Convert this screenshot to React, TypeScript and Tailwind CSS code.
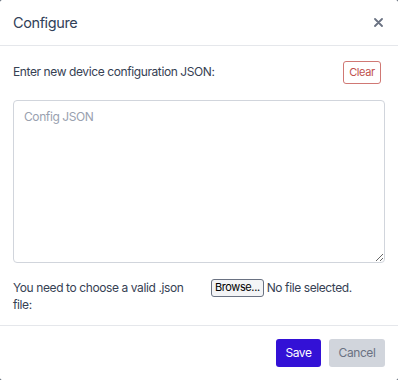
import React from 'react';

export default function App() {
    return (
        <div className="w-[398px] h-[380px] bg-gray-700 font-['Inter',sans-serif] tracking-tight">
            <div className="w-full h-full bg-white rounded-[2px] flex flex-col">
                {/* header */}
                <div className="h-[46px] flex items-center justify-between px-[13px] border-b border-gray-200">
                    <h2 className="text-[14.5px] text-slate-700">Configure</h2>
                    <button type="button" className="mr-[2px] text-gray-500" aria-label="Close">
                        <svg width="9" height="9" viewBox="0 0 9 9" stroke="currentColor" strokeWidth="1.8" strokeLinecap="round">
                            <path d="M1 1l7 7M8 1L1 8" />
                        </svg>
                    </button>
                </div>

                {/* body */}
                <div className="flex-1 px-[13px] pt-[15px] flex flex-col">
                    <div className="flex items-center justify-between">
                        <span className="text-[12px] text-gray-700 -mt-[2px]">Enter new device configuration JSON:</span>
                        <button type="button" className="h-[23px] w-[38px] mr-[4px] text-[11px] text-[#c0504d] border border-[#d07874] rounded-[3px]">Clear</button>
                    </div>
                    <textarea
                        placeholder="Config JSON"
                        className="mt-[16px] h-[163px] w-full resize-y rounded-[4px] border border-gray-300 px-[10px] py-[7px] text-[12px] text-gray-700 placeholder:text-gray-400 outline-none"
                    />
                    <div className="grid grid-cols-2 gap-x-6 mt-[16px] text-[12px] text-gray-700">
                        <span className="leading-[17px]">You need to choose a valid .json file:</span>
                        <div className="flex items-center gap-[3px] h-[17px]">
                            <span className="px-[3px] h-[18px] flex items-center border border-gray-500 rounded-[3px] bg-gray-100 text-[11px] text-black">Browse...</span>
                            <span className="text-gray-700">No file selected.</span>
                        </div>
                    </div>
                </div>

                {/* footer */}
                <div className="h-[55px] border-t border-gray-200 flex items-center justify-end gap-[8px] px-[13px]">
                    <button type="button" className="h-[28px] w-[45px] rounded-[3px] bg-[#3311d6] text-white text-[12px]">Save</button>
                    <button type="button" className="h-[28px] w-[56px] rounded-[3px] bg-gray-300 text-gray-500 text-[12px]">Cancel</button>
                </div>
            </div>
        </div>
    );
}
